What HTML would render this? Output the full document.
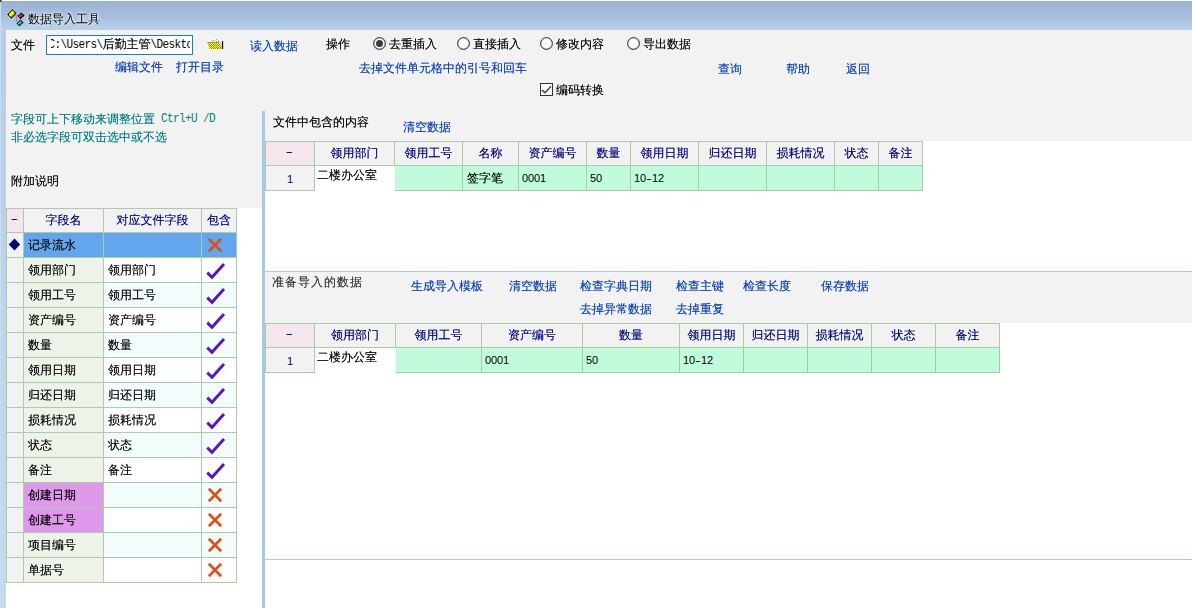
<!DOCTYPE html>
<html lang="zh-CN"><head><meta charset="utf-8"><title>数据导入工具</title>
<style>
*{box-sizing:border-box;margin:0;padding:0}
html,body{width:1192px;height:608px;overflow:hidden;background:#f2f2f2}
body{position:relative;font-family:"Liberation Sans","WenQuanYi Zen Hei","Noto Sans CJK SC",sans-serif;font-size:12px;line-height:14px;color:#000;text-shadow:0 0 0 currentColor;text-shadow:0 0 0 color-mix(in srgb,currentColor 55%,transparent)}
.a{position:absolute;white-space:nowrap}
.t{position:absolute;white-space:nowrap;height:14px;line-height:14px}
.lk{color:#0a40bc}
.tl{color:#007f7f}
.nv{color:#000080}
.m{font-family:"Liberation Mono","WenQuanYi Zen Hei","Noto Sans CJK SC",monospace;font-size:11px;letter-spacing:-0.6px;text-shadow:none;display:inline-block;transform:scaleY(1.14);transform-origin:50% 78%;white-space:pre}
.d{font-family:"Liberation Mono","WenQuanYi Zen Hei","Noto Sans CJK SC",monospace;font-size:11px;text-shadow:none;display:inline-block;transform:scaleX(1.9);position:relative;left:-0.5px;top:-1.8px}
.n{font-family:"Liberation Sans","WenQuanYi Zen Hei","Noto Sans CJK SC",sans-serif;font-size:11px;letter-spacing:-0.1px;text-shadow:none}
.h{display:inline-block;width:6px;text-align:center;transform:scaleX(1.5)}
.up{position:relative;top:-1px}
#title{left:0;top:0;width:1192px;height:30px;background:linear-gradient(#fdfdfe 0,#fdfdfe 1px,#94adcd 1px,#9ab3d2 2px,#a5bedc 16px,#b8d2ec 30px)}
#lb{left:0;top:30px;width:6px;height:578px;background:linear-gradient(#b6cde7,#c4daf0)}
.g{position:absolute;background:#a8cea6}
.c{position:absolute;overflow:hidden;white-space:nowrap;line-height:14px}
.radio{position:absolute;width:13px;height:13px;border-radius:50%;border:1px solid #3a3a3a;background:#fff;box-shadow:inset 0 0 0 0.5px #9a9a9a}
.radio.on::after{content:"";position:absolute;left:2px;top:2px;width:7px;height:7px;border-radius:50%;background:#3a3a3a}
</style></head>
<body>
<div id="title" class="a"></div>
<div id="lb" class="a"></div>
<div class="a" style="left:0;top:0;width:2px;height:2px;background:#444;border-radius:0 0 2px 0"></div>
<div class="a" style="left:0;top:3px;width:1px;height:605px;background:#c9dcf0"></div>
<svg class="a" style="left:4px;top:6px" width="30" height="24" viewBox="0 0 30 24">
<path d="M10.7 9.5H14.4M12.4 9.5V15.4H13.8" fill="none" stroke="#8c8c8c" stroke-width="1"/>
<path d="M8.5 3.9L11.9 7.3L7.5 11.9L3.9 8.5z" fill="#d8d800" stroke="#fff" stroke-opacity="0.45" stroke-width="2.4"/>
<path d="M17.4 7.1L19.9 9.5L16.4 12.7L14.2 10.1z" fill="#c00040" stroke="#fff" stroke-opacity="0.45" stroke-width="2.4"/>
<path d="M16.4 14.2L18.9 16.6L15.4 19.8L13.2 17.4z" fill="#00a8a8" stroke="#fff" stroke-opacity="0.45" stroke-width="2.4"/>
<path d="M8.5 3.9L11.9 7.3L7.5 11.9L3.9 8.5z" fill="#d8d800" stroke="#111" stroke-width="1.15"/>
<path d="M8.5 4.6L10.2 6.3L6.2 10.5L4.7 8.6z" fill="#ffff00"/>
<path d="M17.4 7.1L19.9 9.5L16.4 12.7L14.2 10.1z" fill="#c00030" stroke="#111" stroke-width="1.15"/>
<path d="M17.3 7.8L18.5 9L15.6 11.6L14.9 10.2z" fill="#ff00e0"/>
<path d="M16.4 14.2L18.9 16.6L15.4 19.8L13.2 17.4z" fill="#00a0a0" stroke="#111" stroke-width="1.15"/>
<path d="M16.3 14.9L17.5 16.1L14.6 18.7L13.9 17.3z" fill="#00f0f0"/>
</svg>
<div class="t " style="left:28px;top:12px;text-shadow:0 0 3px #fff,0 0 5px #fff">数据导入工具</div>
<div class="t " style="left:11px;top:38px;">文件</div>
<div class="a" style="left:46px;top:35px;width:147px;height:20px;border:1px solid #1a7ad9;background:#fff"><div class="a" style="left:4px;top:0;width:139px;height:18px;overflow:hidden"><div class="t" style="left:-2.5px;top:1px"><span class="m">C:\Users\</span>后勤主管<span class="m">\Deskto</span></div></div></div>
<svg class="a" style="left:204px;top:36px" width="22" height="16" viewBox="0 0 22 16">
<defs><pattern id="dz" width="2" height="2" patternUnits="userSpaceOnUse"><rect width="2" height="2" fill="#8c8c00"/><rect width="1" height="1" fill="#ffff00"/><rect x="1" y="1" width="1" height="1" fill="#ffff00"/></pattern></defs>
<path d="M2.4 5.9H5.5L7.2 3.2H10.4L12.2 2.6L14.6 4.6L17.2 4.4H19.8V13.6H5.2L4.6 11.5L3.6 9.5z" fill="#fff" fill-opacity="0.9"/>
<path d="M6 5.9L7.6 3.9H10.2L9 5.9z" fill="#f4f400"/>
<path d="M10.4 4.4L14.8 7.4M12.4 3.4L17 7" fill="none" stroke="#444" stroke-width="0.9" stroke-dasharray="1 1"/>
<path d="M3.1 6.7H15.2" stroke="#7a7a90" stroke-width="1" fill="none"/>
<path d="M3.4 7.2H16.6L18 12.9H5.8z" fill="url(#dz)"/>
<path d="M17.9 5.1h1.3v7.8h-1.3z" fill="#050505"/>
</svg>
<div class="t lk" style="left:250px;top:39px;">读入数据</div>
<div class="t " style="left:326px;top:37px;">操作</div>
<div class="radio on" style="left:373px;top:37px"></div>
<div class="t " style="left:389px;top:37px;">去重插入</div>
<div class="radio" style="left:457px;top:37px"></div>
<div class="t " style="left:473px;top:37px;">直接插入</div>
<div class="radio" style="left:540px;top:37px"></div>
<div class="t " style="left:556px;top:37px;">修改内容</div>
<div class="radio" style="left:627px;top:37px"></div>
<div class="t " style="left:643px;top:37px;">导出数据</div>
<div class="t lk" style="left:115px;top:60px;">编辑文件</div>
<div class="t lk" style="left:176px;top:60px;">打开目录</div>
<div class="t lk" style="left:359px;top:61px;">去掉文件单元格中的引号和回车</div>
<div class="t lk" style="left:718px;top:62px;">查询</div>
<div class="t lk" style="left:786px;top:62px;">帮助</div>
<div class="t lk" style="left:846px;top:62px;">返回</div>
<svg class="a" style="left:540px;top:83px" width="13" height="13" viewBox="0 0 13 13"><rect x="0.5" y="0.5" width="12" height="12" fill="#fff" stroke="#333"/><path d="M1.8 7.2L5 9.7L11.1 3.3" fill="none" stroke="#444" stroke-width="1.5"/></svg>
<div class="t " style="left:556px;top:83px;">编码转换</div>
<div class="t tl" style="left:11px;top:112px;">字段可上下移动来调整位置<span class="m up"> Ctrl+U /D</span></div>
<div class="t tl" style="left:11px;top:130px;">非必选字段可双击选中或不选</div>
<div class="t " style="left:11px;top:174px;">附加说明</div>
<div class="a" style="left:6px;top:208px;width:256px;height:400px;background:#fff"></div>
<div class="g" style="left:6px;top:208px;width:231px;height:375px"></div>
<div class="c nv" style="left:7px;top:209px;width:16px;height:23px;background:#f5e6ee;text-align:center;padding-top:4px"><span class="d">-</span></div>
<div class="c nv" style="left:24px;top:209px;width:79px;height:23px;background:#f2f2f2;text-align:center;padding-top:4px">字段名</div>
<div class="c nv" style="left:104px;top:209px;width:97px;height:23px;background:#f2f2f2;text-align:center;padding-top:4px">对应文件字段</div>
<div class="c nv" style="left:202px;top:209px;width:34px;height:23px;background:#f2f2f2;text-align:center;padding-top:4px">包含</div>
<div class="c " style="left:7px;top:233px;width:16px;height:24px;background:#f2f2f2;"><svg width="16" height="24" viewBox="0 0 16 24" style="position:absolute;left:0;top:0"><path d="M7.5 5.6L13.2 11.5L7.5 17.4L1.8 11.5z" fill="#00007c"/></svg></div>
<div class="c " style="left:24px;top:233px;width:79px;height:24px;background:#62a6ee;padding:5px 0 0 4px">记录流水</div>
<div class="c " style="left:104px;top:233px;width:97px;height:24px;background:#62a6ee;padding:5px 0 0 4px"></div>
<div class="c " style="left:202px;top:233px;width:34px;height:24px;background:#62a6ee;"><svg width="33" height="24" viewBox="0 0 33 24" style="position:absolute;left:0;top:0"><path d="M6.8 5.8L19.2 18.2M19.2 5.8L6.8 18.2" fill="none" stroke="#d8531c" stroke-width="2.7"/></svg></div>
<div class="c " style="left:7px;top:258px;width:16px;height:24px;background:#f2f2f2;"></div>
<div class="c " style="left:24px;top:258px;width:79px;height:24px;background:#eef3e9;padding:5px 0 0 4px">领用部门</div>
<div class="c " style="left:104px;top:258px;width:97px;height:24px;background:#fff;padding:5px 0 0 4px">领用部门</div>
<div class="c " style="left:202px;top:258px;width:34px;height:24px;background:#fff;"><svg width="33" height="24" viewBox="0 0 33 24" style="position:absolute;left:0;top:0"><path d="M5.3 14.6L10 19.3L22 6" fill="none" stroke="#5a14c8" stroke-width="2.9"/></svg></div>
<div class="c " style="left:7px;top:283px;width:16px;height:24px;background:#f2f2f2;"></div>
<div class="c " style="left:24px;top:283px;width:79px;height:24px;background:#eef3e9;padding:5px 0 0 4px">领用工号</div>
<div class="c " style="left:104px;top:283px;width:97px;height:24px;background:#f3fcfd;padding:5px 0 0 4px">领用工号</div>
<div class="c " style="left:202px;top:283px;width:34px;height:24px;background:#f3fcfd;"><svg width="33" height="24" viewBox="0 0 33 24" style="position:absolute;left:0;top:0"><path d="M5.3 14.6L10 19.3L22 6" fill="none" stroke="#5a14c8" stroke-width="2.9"/></svg></div>
<div class="c " style="left:7px;top:308px;width:16px;height:24px;background:#f2f2f2;"></div>
<div class="c " style="left:24px;top:308px;width:79px;height:24px;background:#eef3e9;padding:5px 0 0 4px">资产编号</div>
<div class="c " style="left:104px;top:308px;width:97px;height:24px;background:#fff;padding:5px 0 0 4px">资产编号</div>
<div class="c " style="left:202px;top:308px;width:34px;height:24px;background:#fff;"><svg width="33" height="24" viewBox="0 0 33 24" style="position:absolute;left:0;top:0"><path d="M5.3 14.6L10 19.3L22 6" fill="none" stroke="#5a14c8" stroke-width="2.9"/></svg></div>
<div class="c " style="left:7px;top:333px;width:16px;height:24px;background:#f2f2f2;"></div>
<div class="c " style="left:24px;top:333px;width:79px;height:24px;background:#eef3e9;padding:5px 0 0 4px">数量</div>
<div class="c " style="left:104px;top:333px;width:97px;height:24px;background:#f3fcfd;padding:5px 0 0 4px">数量</div>
<div class="c " style="left:202px;top:333px;width:34px;height:24px;background:#f3fcfd;"><svg width="33" height="24" viewBox="0 0 33 24" style="position:absolute;left:0;top:0"><path d="M5.3 14.6L10 19.3L22 6" fill="none" stroke="#5a14c8" stroke-width="2.9"/></svg></div>
<div class="c " style="left:7px;top:358px;width:16px;height:24px;background:#f2f2f2;"></div>
<div class="c " style="left:24px;top:358px;width:79px;height:24px;background:#eef3e9;padding:5px 0 0 4px">领用日期</div>
<div class="c " style="left:104px;top:358px;width:97px;height:24px;background:#fff;padding:5px 0 0 4px">领用日期</div>
<div class="c " style="left:202px;top:358px;width:34px;height:24px;background:#fff;"><svg width="33" height="24" viewBox="0 0 33 24" style="position:absolute;left:0;top:0"><path d="M5.3 14.6L10 19.3L22 6" fill="none" stroke="#5a14c8" stroke-width="2.9"/></svg></div>
<div class="c " style="left:7px;top:383px;width:16px;height:24px;background:#f2f2f2;"></div>
<div class="c " style="left:24px;top:383px;width:79px;height:24px;background:#eef3e9;padding:5px 0 0 4px">归还日期</div>
<div class="c " style="left:104px;top:383px;width:97px;height:24px;background:#f3fcfd;padding:5px 0 0 4px">归还日期</div>
<div class="c " style="left:202px;top:383px;width:34px;height:24px;background:#f3fcfd;"><svg width="33" height="24" viewBox="0 0 33 24" style="position:absolute;left:0;top:0"><path d="M5.3 14.6L10 19.3L22 6" fill="none" stroke="#5a14c8" stroke-width="2.9"/></svg></div>
<div class="c " style="left:7px;top:408px;width:16px;height:24px;background:#f2f2f2;"></div>
<div class="c " style="left:24px;top:408px;width:79px;height:24px;background:#eef3e9;padding:5px 0 0 4px">损耗情况</div>
<div class="c " style="left:104px;top:408px;width:97px;height:24px;background:#fff;padding:5px 0 0 4px">损耗情况</div>
<div class="c " style="left:202px;top:408px;width:34px;height:24px;background:#fff;"><svg width="33" height="24" viewBox="0 0 33 24" style="position:absolute;left:0;top:0"><path d="M5.3 14.6L10 19.3L22 6" fill="none" stroke="#5a14c8" stroke-width="2.9"/></svg></div>
<div class="c " style="left:7px;top:433px;width:16px;height:24px;background:#f2f2f2;"></div>
<div class="c " style="left:24px;top:433px;width:79px;height:24px;background:#eef3e9;padding:5px 0 0 4px">状态</div>
<div class="c " style="left:104px;top:433px;width:97px;height:24px;background:#f3fcfd;padding:5px 0 0 4px">状态</div>
<div class="c " style="left:202px;top:433px;width:34px;height:24px;background:#f3fcfd;"><svg width="33" height="24" viewBox="0 0 33 24" style="position:absolute;left:0;top:0"><path d="M5.3 14.6L10 19.3L22 6" fill="none" stroke="#5a14c8" stroke-width="2.9"/></svg></div>
<div class="c " style="left:7px;top:458px;width:16px;height:24px;background:#f2f2f2;"></div>
<div class="c " style="left:24px;top:458px;width:79px;height:24px;background:#eef3e9;padding:5px 0 0 4px">备注</div>
<div class="c " style="left:104px;top:458px;width:97px;height:24px;background:#fff;padding:5px 0 0 4px">备注</div>
<div class="c " style="left:202px;top:458px;width:34px;height:24px;background:#fff;"><svg width="33" height="24" viewBox="0 0 33 24" style="position:absolute;left:0;top:0"><path d="M5.3 14.6L10 19.3L22 6" fill="none" stroke="#5a14c8" stroke-width="2.9"/></svg></div>
<div class="c " style="left:7px;top:483px;width:16px;height:24px;background:#f2f2f2;"></div>
<div class="c " style="left:24px;top:483px;width:79px;height:24px;background:#df98ec;padding:5px 0 0 4px">创建日期</div>
<div class="c " style="left:104px;top:483px;width:97px;height:24px;background:#f3fcfd;padding:5px 0 0 4px"></div>
<div class="c " style="left:202px;top:483px;width:34px;height:24px;background:#f3fcfd;"><svg width="33" height="24" viewBox="0 0 33 24" style="position:absolute;left:0;top:0"><path d="M6.8 5.8L19.2 18.2M19.2 5.8L6.8 18.2" fill="none" stroke="#d8531c" stroke-width="2.7"/></svg></div>
<div class="c " style="left:7px;top:508px;width:16px;height:24px;background:#f2f2f2;"></div>
<div class="c " style="left:24px;top:508px;width:79px;height:24px;background:#df98ec;padding:5px 0 0 4px">创建工号</div>
<div class="c " style="left:104px;top:508px;width:97px;height:24px;background:#fff;padding:5px 0 0 4px"></div>
<div class="c " style="left:202px;top:508px;width:34px;height:24px;background:#fff;"><svg width="33" height="24" viewBox="0 0 33 24" style="position:absolute;left:0;top:0"><path d="M6.8 5.8L19.2 18.2M19.2 5.8L6.8 18.2" fill="none" stroke="#d8531c" stroke-width="2.7"/></svg></div>
<div class="c " style="left:7px;top:533px;width:16px;height:24px;background:#f2f2f2;"></div>
<div class="c " style="left:24px;top:533px;width:79px;height:24px;background:#eef3e9;padding:5px 0 0 4px">项目编号</div>
<div class="c " style="left:104px;top:533px;width:97px;height:24px;background:#f3fcfd;padding:5px 0 0 4px"></div>
<div class="c " style="left:202px;top:533px;width:34px;height:24px;background:#f3fcfd;"><svg width="33" height="24" viewBox="0 0 33 24" style="position:absolute;left:0;top:0"><path d="M6.8 5.8L19.2 18.2M19.2 5.8L6.8 18.2" fill="none" stroke="#d8531c" stroke-width="2.7"/></svg></div>
<div class="c " style="left:7px;top:558px;width:16px;height:24px;background:#f2f2f2;"></div>
<div class="c " style="left:24px;top:558px;width:79px;height:24px;background:#eef3e9;padding:5px 0 0 4px">单据号</div>
<div class="c " style="left:104px;top:558px;width:97px;height:24px;background:#fff;padding:5px 0 0 4px"></div>
<div class="c " style="left:202px;top:558px;width:34px;height:24px;background:#fff;"><svg width="33" height="24" viewBox="0 0 33 24" style="position:absolute;left:0;top:0"><path d="M6.8 5.8L19.2 18.2M19.2 5.8L6.8 18.2" fill="none" stroke="#d8531c" stroke-width="2.7"/></svg></div>
<div class="a" style="left:262px;top:111px;width:3px;height:497px;background:#a7c9ee"></div>
<div class="a" style="left:265px;top:141px;width:927px;height:130px;background:#fff"></div>
<div class="t " style="left:273px;top:115px;">文件中包含的内容</div>
<div class="t lk" style="left:403px;top:120px;">清空数据</div>
<div class="g" style="left:265px;top:141px;width:658px;height:50px"></div>
<div class="c nv" style="left:266px;top:142px;width:48px;height:23px;background:#f5e6ee;text-align:center;padding-top:4px"><span class="d">-</span></div>
<div class="c nv" style="left:315px;top:142px;width:79px;height:23px;background:#f2f2f2;text-align:center;padding-top:4px">领用部门</div>
<div class="c nv" style="left:395px;top:142px;width:67px;height:23px;background:#f2f2f2;text-align:center;padding-top:4px">领用工号</div>
<div class="c nv" style="left:463px;top:142px;width:55px;height:23px;background:#f2f2f2;text-align:center;padding-top:4px">名称</div>
<div class="c nv" style="left:519px;top:142px;width:67px;height:23px;background:#f2f2f2;text-align:center;padding-top:4px">资产编号</div>
<div class="c nv" style="left:587px;top:142px;width:43px;height:23px;background:#f2f2f2;text-align:center;padding-top:4px">数量</div>
<div class="c nv" style="left:631px;top:142px;width:67px;height:23px;background:#f2f2f2;text-align:center;padding-top:4px">领用日期</div>
<div class="c nv" style="left:699px;top:142px;width:67px;height:23px;background:#f2f2f2;text-align:center;padding-top:4px">归还日期</div>
<div class="c nv" style="left:767px;top:142px;width:67px;height:23px;background:#f2f2f2;text-align:center;padding-top:4px">损耗情况</div>
<div class="c nv" style="left:835px;top:142px;width:43px;height:23px;background:#f2f2f2;text-align:center;padding-top:4px">状态</div>
<div class="c nv" style="left:879px;top:142px;width:43px;height:23px;background:#f2f2f2;text-align:center;padding-top:4px">备注</div>
<div class="c nv n" style="left:266px;top:166px;width:48px;height:24px;background:#f2f2f2;text-align:center;padding-top:6px">1</div>
<div class="c" style="left:315px;top:166px;width:80px;height:27px;background:#fff;padding:2px 0 0 2px">二楼办公室</div>
<div class="c " style="left:395px;top:166px;width:67px;height:24px;background:#c0fcdc;padding:5px 0 0 4px"></div>
<div class="c " style="left:463px;top:166px;width:55px;height:24px;background:#c0fcdc;padding:5px 0 0 4px">签字笔</div>
<div class="c n" style="left:519px;top:166px;width:67px;height:24px;background:#c0fcdc;padding:5px 0 0 3px">0001</div>
<div class="c n" style="left:587px;top:166px;width:43px;height:24px;background:#c0fcdc;padding:5px 0 0 3px">50</div>
<div class="c n" style="left:631px;top:166px;width:67px;height:24px;background:#c0fcdc;padding:5px 0 0 3px">10<span class="h">-</span>12</div>
<div class="c " style="left:699px;top:166px;width:67px;height:24px;background:#c0fcdc;padding:5px 0 0 4px"></div>
<div class="c " style="left:767px;top:166px;width:67px;height:24px;background:#c0fcdc;padding:5px 0 0 4px"></div>
<div class="c " style="left:835px;top:166px;width:43px;height:24px;background:#c0fcdc;padding:5px 0 0 4px"></div>
<div class="c " style="left:879px;top:166px;width:43px;height:24px;background:#c0fcdc;padding:5px 0 0 4px"></div>
<div class="a" style="left:265px;top:271px;width:927px;height:1px;background:#a7c9ee"></div>
<div class="a" style="left:265px;top:323px;width:927px;height:285px;background:#fff"></div>
<div class="t " style="left:272px;top:275px;color:#333;letter-spacing:1px">准备导入的数据</div>
<div class="t lk" style="left:411px;top:279px;">生成导入模板</div>
<div class="t lk" style="left:509px;top:279px;">清空数据</div>
<div class="t lk" style="left:580px;top:279px;">检查字典日期</div>
<div class="t lk" style="left:676px;top:279px;">检查主键</div>
<div class="t lk" style="left:743px;top:279px;">检查长度</div>
<div class="t lk" style="left:821px;top:279px;">保存数据</div>
<div class="t lk" style="left:580px;top:302px;">去掉异常数据</div>
<div class="t lk" style="left:676px;top:302px;">去掉重复</div>
<div class="g" style="left:265px;top:323px;width:735px;height:50px"></div>
<div class="c nv" style="left:266px;top:324px;width:48px;height:23px;background:#f5e6ee;text-align:center;padding-top:4px"><span class="d">-</span></div>
<div class="c nv" style="left:315px;top:324px;width:80px;height:23px;background:#f2f2f2;text-align:center;padding-top:4px">领用部门</div>
<div class="c nv" style="left:396px;top:324px;width:85px;height:23px;background:#f2f2f2;text-align:center;padding-top:4px">领用工号</div>
<div class="c nv" style="left:482px;top:324px;width:100px;height:23px;background:#f2f2f2;text-align:center;padding-top:4px">资产编号</div>
<div class="c nv" style="left:583px;top:324px;width:96px;height:23px;background:#f2f2f2;text-align:center;padding-top:4px">数量</div>
<div class="c nv" style="left:680px;top:324px;width:63px;height:23px;background:#f2f2f2;text-align:center;padding-top:4px">领用日期</div>
<div class="c nv" style="left:744px;top:324px;width:63px;height:23px;background:#f2f2f2;text-align:center;padding-top:4px">归还日期</div>
<div class="c nv" style="left:808px;top:324px;width:63px;height:23px;background:#f2f2f2;text-align:center;padding-top:4px">损耗情况</div>
<div class="c nv" style="left:872px;top:324px;width:63px;height:23px;background:#f2f2f2;text-align:center;padding-top:4px">状态</div>
<div class="c nv" style="left:936px;top:324px;width:63px;height:23px;background:#f2f2f2;text-align:center;padding-top:4px">备注</div>
<div class="c nv n" style="left:266px;top:348px;width:48px;height:24px;background:#f2f2f2;text-align:center;padding-top:6px">1</div>
<div class="c" style="left:315px;top:348px;width:81px;height:27px;background:#fff;padding:2px 0 0 2px">二楼办公室</div>
<div class="c " style="left:396px;top:348px;width:85px;height:24px;background:#c0fcdc;padding:5px 0 0 4px"></div>
<div class="c n" style="left:482px;top:348px;width:100px;height:24px;background:#c0fcdc;padding:5px 0 0 3px">0001</div>
<div class="c n" style="left:583px;top:348px;width:96px;height:24px;background:#c0fcdc;padding:5px 0 0 3px">50</div>
<div class="c n" style="left:680px;top:348px;width:63px;height:24px;background:#c0fcdc;padding:5px 0 0 3px">10<span class="h">-</span>12</div>
<div class="c " style="left:744px;top:348px;width:63px;height:24px;background:#c0fcdc;padding:5px 0 0 4px"></div>
<div class="c " style="left:808px;top:348px;width:63px;height:24px;background:#c0fcdc;padding:5px 0 0 4px"></div>
<div class="c " style="left:872px;top:348px;width:63px;height:24px;background:#c0fcdc;padding:5px 0 0 4px"></div>
<div class="c " style="left:936px;top:348px;width:63px;height:24px;background:#c0fcdc;padding:5px 0 0 4px"></div>
<div class="a" style="left:265px;top:559px;width:927px;height:1px;background:#a7c9ee"></div>
</body></html>
